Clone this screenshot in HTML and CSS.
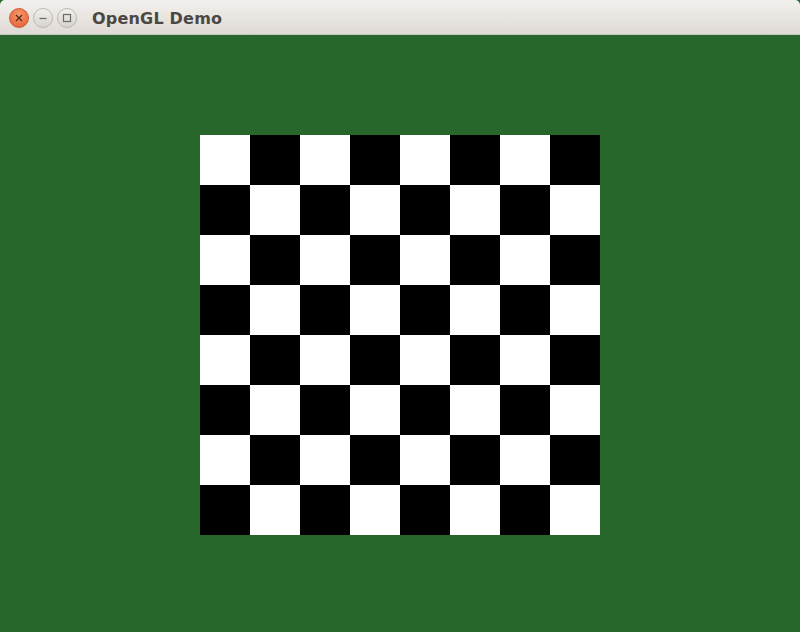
FILE: index.html
```html
<!DOCTYPE html>
<html>
<head>
<meta charset="utf-8">
<link rel="stylesheet" href="styles.css">
</head>
<body>
<div class="window">
  <div class="titlebar">
    <div class="controls">
      <span class="btn close"><svg width="10" height="10" viewBox="0 0 10 10"><path d="M2 2L8 8M8 2L2 8" stroke="#5a2a1a" stroke-width="1.4"/></svg></span>
      <span class="btn"><svg width="10" height="10" viewBox="0 0 10 10"><path d="M1.5 5.5H8.5" stroke="#6b6b66" stroke-width="1.2"/></svg></span>
      <span class="btn"><svg width="10" height="10" viewBox="0 0 10 10"><rect x="1.5" y="1.5" width="7" height="7" fill="none" stroke="#6b6b66" stroke-width="1.2"/></svg></span>
    </div>
    <div class="title">OpenGL Demo</div>
  </div>
  <div class="canvas">
    <div class="board">
      <div class="w"></div><div class="b"></div><div class="w"></div><div class="b"></div><div class="w"></div><div class="b"></div><div class="w"></div><div class="b"></div>
      <div class="b"></div><div class="w"></div><div class="b"></div><div class="w"></div><div class="b"></div><div class="w"></div><div class="b"></div><div class="w"></div>
      <div class="w"></div><div class="b"></div><div class="w"></div><div class="b"></div><div class="w"></div><div class="b"></div><div class="w"></div><div class="b"></div>
      <div class="b"></div><div class="w"></div><div class="b"></div><div class="w"></div><div class="b"></div><div class="w"></div><div class="b"></div><div class="w"></div>
      <div class="w"></div><div class="b"></div><div class="w"></div><div class="b"></div><div class="w"></div><div class="b"></div><div class="w"></div><div class="b"></div>
      <div class="b"></div><div class="w"></div><div class="b"></div><div class="w"></div><div class="b"></div><div class="w"></div><div class="b"></div><div class="w"></div>
      <div class="w"></div><div class="b"></div><div class="w"></div><div class="b"></div><div class="w"></div><div class="b"></div><div class="w"></div><div class="b"></div>
      <div class="b"></div><div class="w"></div><div class="b"></div><div class="w"></div><div class="b"></div><div class="w"></div><div class="b"></div><div class="w"></div>
    </div>
  </div>
</div>
</body>
</html>
```
FILE: styles.css
```css
html, body { margin: 0; padding: 0; }
body { width: 800px; height: 632px; overflow: hidden; background: #27672b; font-family: "DejaVu Sans", "Noto Sans", sans-serif; }
.window { width: 800px; height: 632px; display: flex; flex-direction: column; }
.titlebar {
  height: 34px;
  flex: none;
  display: flex;
  align-items: center;
  background: linear-gradient(#f3f1ee, #dfdad5);
  border-bottom: 1px solid #c9c4bf;
  border-radius: 5px 5px 0 0;
}
.controls { display: flex; gap: 4px; padding-left: 9px; padding-top: 1px; }
.btn {
  display: flex; align-items: center; justify-content: center;
  background: linear-gradient(#f2f0ed, #d8d3ce);
  border: 1px solid #bdb8b3;
  box-sizing: border-box;
  width: 20px; height: 20px; border-radius: 50%;
}
.btn.close { background: radial-gradient(circle at 50% 35%, #f79a6f, #e6572c); border-color: #c6603c; }
.title { margin-left: 15px; padding-top: 2px; font-weight: bold; font-size: 16px; color: #4b4843; letter-spacing: 0.2px; }
.canvas { flex: 1; display: flex; justify-content: center; padding-top: 100px; }
.board { width: 400px; height: 400px; display: grid; grid-template-columns: repeat(8, 50px); grid-template-rows: repeat(8, 50px); }
.w { background: #fff; }
.b { background: #000; }
```
